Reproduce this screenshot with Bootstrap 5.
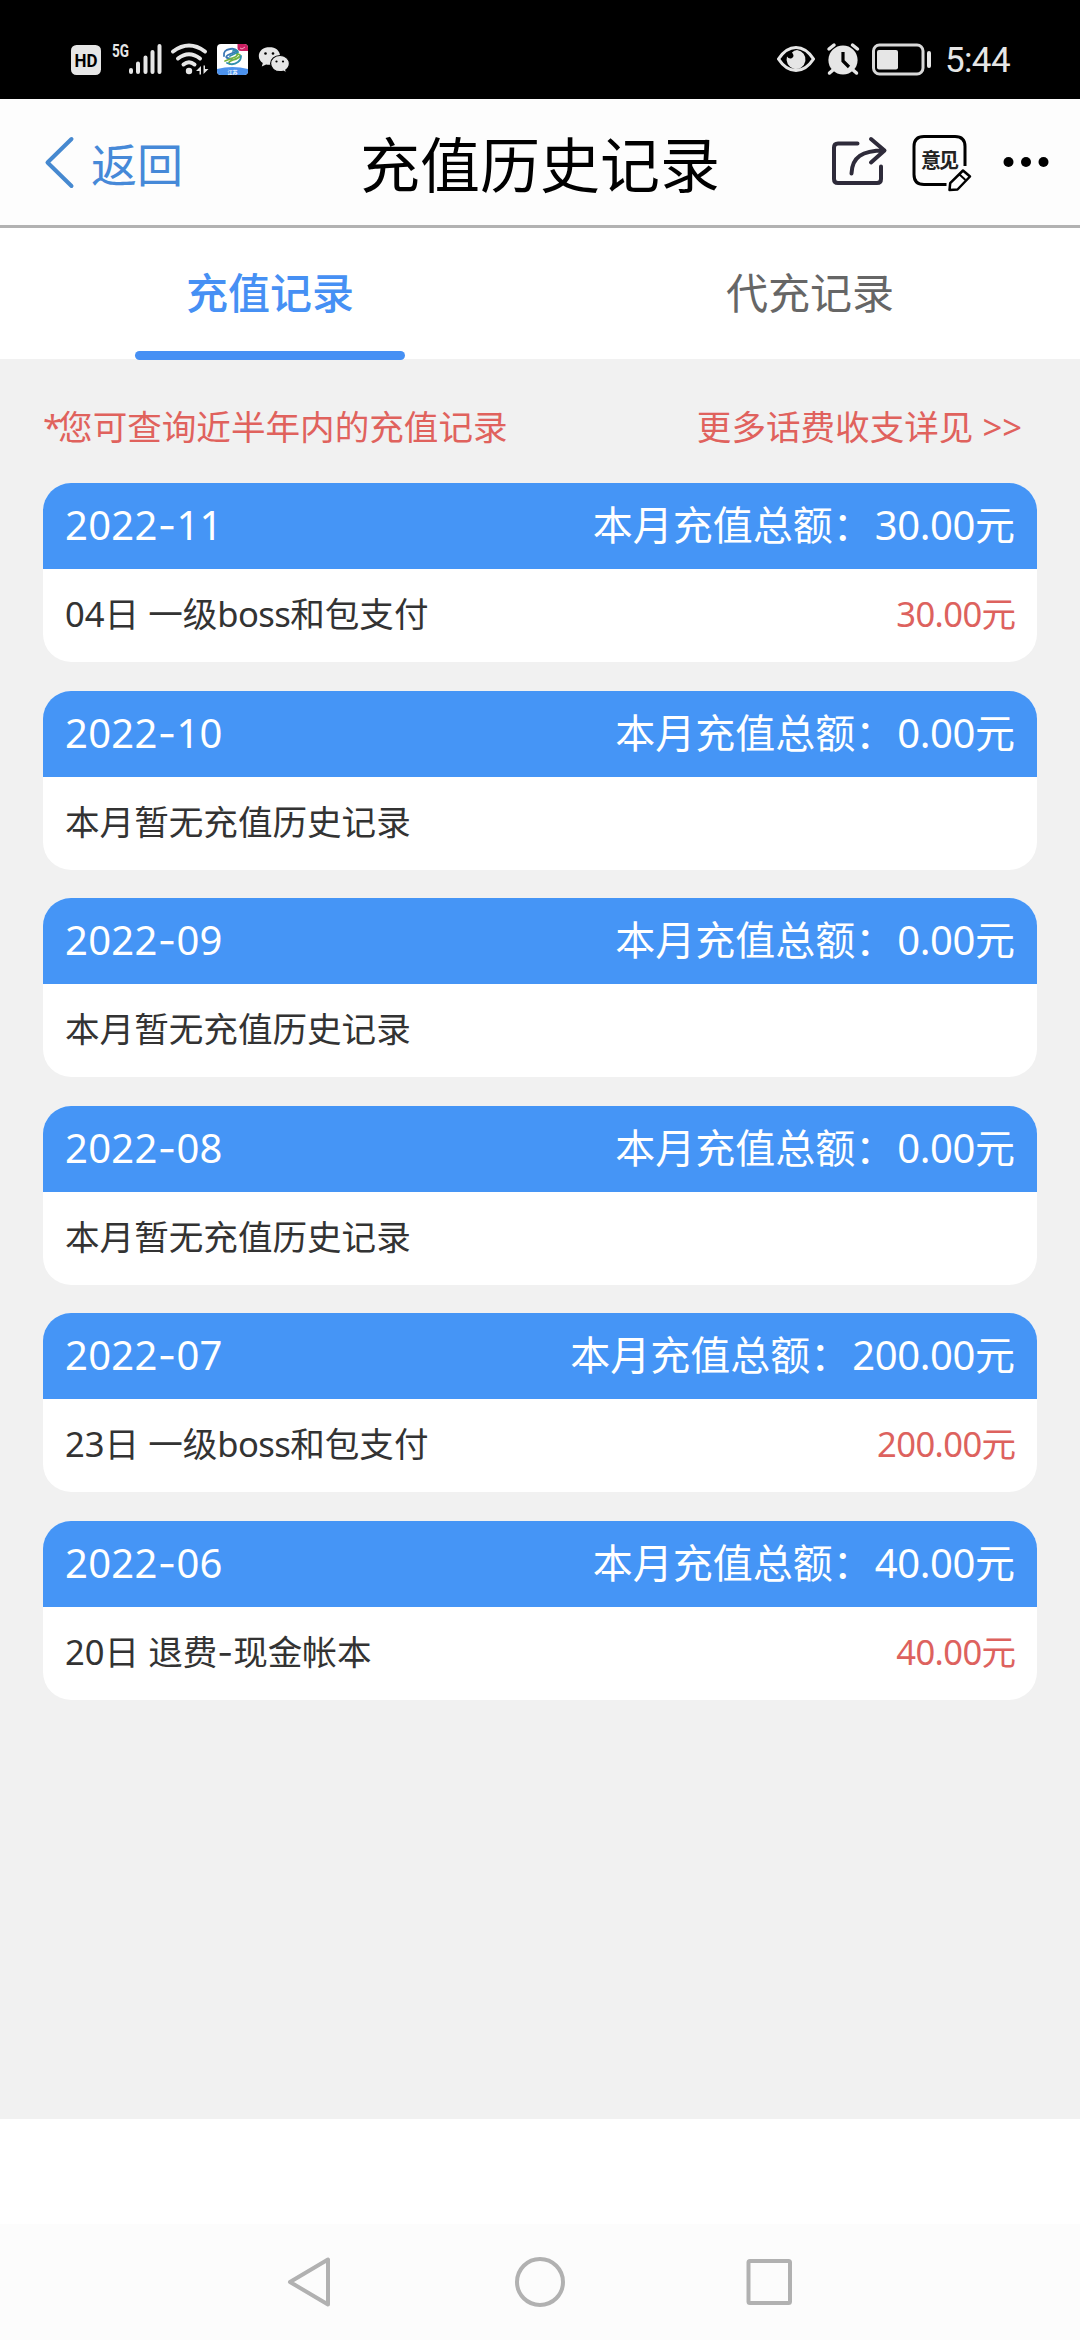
<!DOCTYPE html>
<html lang="zh-CN">
<head>
<meta charset="utf-8">
<meta name="viewport" content="width=device-width, initial-scale=1">
<title>充值历史记录</title>
<link href="https://cdn.jsdelivr.net/npm/bootstrap@5.3.0/dist/css/bootstrap.min.css" rel="stylesheet">
<style>
  body { width: 1080px; height: 2340px; overflow: hidden; background: #fff; color: #333; font-family: "Noto Sans", "Noto Sans CJK SC", sans-serif; }
  svg { display: block; flex: none; }
  .status-bar { height: 99px; padding: 0 70px 0 60px; background: #000; }
  .clock { font: 400 35px/42px Roboto, sans-serif; color: #e6e6e6; letter-spacing: -.6px; margin: 40px 0 0 11px; }
  .app-header { height: 129px; background: #fdfdfd; border-bottom: 3px solid #b2b2b2; }
  .app-header .side { flex: 1 1 0; }
  .back-link { color: #4689d8; font-size: 46px; line-height: 60px; padding-left: 43px; gap: 16px; }
  .back-link span { padding-top: 4px; }
  .page-title { font-size: 60px; line-height: 80px; color: #000; font-weight: 400; padding-top: 5px; }
  .tab-strip { height: 131px; background: #fff; }
  .tab-strip .nav-link { height: 131px; padding: 0; color: #666; font-size: 42px; line-height: 130px; position: relative; border-radius: 0; }
  .tab-strip .nav-link.active { color: #4690f4; font-weight: 500; }
  .tab-strip .nav-link.active::after { content: ""; position: absolute; left: 25%; width: 50%; bottom: -1px; height: 9px; border-radius: 5px; background: #4690f4; }
  .records { height: 1760px; background: #f1f1f1; padding: 46px 43px 0; }
  .notice { font-size: 34.6px; line-height: 44px; color: #e0625d; margin-bottom: 34px; }
  .notice .more { padding-right: 15px; }
  .star { letter-spacing: -4px; }
  .month { height: 179px; border: 0; border-radius: 28px; overflow: hidden; margin-bottom: 28.6px; }
  .month .card-header { height: 86px; padding: 0 22px; border: 0; background: #4595f6; color: #fff; font-size: 40px; line-height: 83px; }
  .month .card-body { padding: 0 22px; font-size: 34.6px; line-height: 90px; color: #333; flex: none; height: 93px; }
  .total { letter-spacing: -.4px; margin-left: 2px; }
  .date { letter-spacing: .3px; }
  .amount { color: #dd625e; }
  .amount, .latin { letter-spacing: -.6px; }
  .amount { margin-right: -.6px; }
  .dash { font-family: Inter, sans-serif; }
  .spacer { height: 105px; background: #fff; }
  .sys-nav { height: 116px; background: #fcfcfc; }
</style>
</head>
<body>
<div class="status-bar d-flex align-items-start justify-content-between">
  <svg width="240" height="99" viewBox="60 0 240 99">
    <rect x="71" y="45" width="30" height="30" rx="5.5" fill="#e6e6e6"/>
    <text x="86" y="67" font-family="Roboto" font-weight="700" font-size="19" text-anchor="middle" textLength="23" lengthAdjust="spacingAndGlyphs" fill="#000">HD</text>
    <text x="112" y="57" font-family="Roboto" font-weight="700" font-size="18" textLength="17" lengthAdjust="spacingAndGlyphs" fill="#e6e6e6">5G</text>
    <g stroke="#e6e6e6" stroke-width="4" stroke-linecap="round" fill="none">
      <path d="M131 70v2M138 63.5V72M145.5 57.5V72M152.5 52V72M159.5 46V72"/>
      <path d="M173 51.5Q189 39.500 205 51.500M178 58.500Q189 50 200 58.500M183.500 64.500Q189 60 194.500 64.500"/>
    </g>
    <circle cx="189" cy="71" r="3.2" fill="#e6e6e6"/>
    <path d="M196 71l5-5v8.500h-1.500V71zM208.500 69l-5 5V65.500h1.500V69z" fill="#e6e6e6"/>
    <rect x="217" y="44" width="31" height="31" rx="4" fill="#fff"/>
    <path d="M217 69q15.500-4 31 0v2q0 4-4 4h-23q-4 0-4-4z" fill="#4c92ee"/>
    <text x="232.500" y="74" font-family="Noto Sans CJK SC" font-weight="700" font-size="5" text-anchor="middle" fill="#fff">江苏</text>
    <path d="M237.500 44H244q4 0 4 4v3h-7q-3.500 0-3.500-3.500z" fill="#cb1e61"/>
    <path d="M240 48l2 1 3-2" stroke="#f4a5c3" fill="none"/>
    <g fill="none" stroke-width="1.800" stroke-linecap="round">
      <path d="M224 56q-1-6 6-7 5-1 7 2l-9 4q-3 2-1 3l5 1" stroke="#3976b5"/>
      <path d="M225 61l10-4q4-2 1-4l4 2M240 56q-1 2-7 4-6 2-3 4" stroke="#73b43f"/>
      <path d="M227 63q6 3 11-1 3-2 3-6M233 51q4-2 5 1l-8 4" stroke="#318fae"/>
    </g>
    <path d="M269.500 47c-6 0-10.700 3.900-10.700 9 0 3 1.600 5.400 4 7l-1 3.600 4.300-2.200c1 .3 2 .4 3.400.4 6 0 10.600-4 10.600-8.800 0-5.100-4.600-9-10.600-9z" fill="#e6e6e6"/>
    <path d="M280 55.500c-5.300 0-9.400 3.600-9.400 8.100s4.100 8.100 9.400 8.100c1.200 0 2.200-.2 3.200-.5l3.600 1.900-1-3.100c2.200-1.500 3.600-3.700 3.600-6.400 0-4.500-4.100-8.100-9.400-8.100z" fill="#e6e6e6" stroke="#000" stroke-width="1.200"/>
    <g><circle cx="265.500" cy="53.500" r="1.300"/><circle cx="273" cy="53.500" r="1.300"/><circle cx="276.500" cy="61.500" r="1.100"/><circle cx="283" cy="61.500" r="1.100"/></g>
  </svg>
  <div class="d-flex">
    <svg width="160" height="99" viewBox="774 0 160 99">
      <path d="M778.500 59Q786 47.500 796 47.500T813.500 59Q806 70.500 796 70.500T778.500 59z" fill="none" stroke="#e6e6e6" stroke-width="3.200" stroke-linejoin="round"/>
      <path d="M797 50a9.500 9.500 0 1 1-10 6.500q2 3 5 1.500 3-2 0-5.500 2-2.500 5-2.500z" fill="#e6e6e6"/>
      <circle cx="843" cy="60" r="14.600" fill="#e6e6e6"/>
      <path d="M829 49l5-4M857.500 49l-5-4M833 70l-3.500 3M853 70l3.500 3" stroke="#e6e6e6" stroke-width="3.500" stroke-linecap="round"/>
      <path d="M843 52v9l6 6" fill="none" stroke="#000" stroke-width="3.200"/>
      <rect x="873.500" y="45" width="49.500" height="29" rx="6" fill="none" stroke="#d8d8d8" stroke-width="3"/>
      <rect x="877" y="50" width="21" height="19.500" rx="2" fill="#e6e6e6"/>
      <rect x="927" y="51" width="4" height="17" rx="2" fill="#e6e6e6"/>
    </svg>
    <div class="clock">5:44</div>
  </div>
</div>

<header class="app-header d-flex align-items-center">
  <div class="side">
    <div class="back-link d-flex align-items-center">
      <svg width="32" height="56" viewBox="43 135 32 56"><path d="M71.500 140L47.500 163.500L71.500 187" fill="none" stroke="#4689d0" stroke-width="4" stroke-linecap="round" stroke-linejoin="round"/></svg>
      <span>返回</span>
    </div>
  </div>
  <h1 class="page-title mb-0">充值历史记录</h1>
  <div class="side d-flex justify-content-end">
    <svg width="260" height="126" viewBox="820 99 260 126">
      <g fill="none" stroke="#2e2b3a" stroke-width="4" stroke-linecap="round" stroke-linejoin="round">
        <path d="M857.500 143.500H838q-4 0-4 4V179q0 4 4 4h39q4 0 4-4V166.500"/>
        <path d="M851.500 173.500C852 157 862 150.500 884 150.500M871 139L884.500 150.500L871 162.500"/>
      </g>
      <g fill="none" stroke="#000" stroke-width="3" stroke-linejoin="round">
        <path d="M946.500 184.500H924q-10 0-10-10V146.500q0-10 10-10h31q10 0 10 10V166"/>
        <path d="M949.500 190l.700-6.800L963 170.500l7 6-12.500 13z" stroke-width="2.500"/>
        <path d="M959.500 174.500l6 5.500" stroke-width="2"/>
      </g>
      <text x="940" y="168" font-family="Noto Sans CJK SC" font-size="20" font-weight="700" text-anchor="middle" textLength="38" fill="#222">意见</text>
      <circle cx="1008.500" cy="162" r="5"/><circle cx="1026" cy="162" r="5"/><circle cx="1043.500" cy="162" r="5"/>
    </svg>
  </div>
</header>

<nav class="tab-strip nav nav-fill">
  <a class="nav-link nav-item active w-50" href="#">充值记录</a>
  <a class="nav-link nav-item w-50" href="#">代充记录</a>
</nav>

<main class="records">
  <div class="notice d-flex justify-content-between"><span><span class="star">*</span>您可查询近半年内的充值记录</span><span class="more">更多话费收支详见 &gt;&gt;</span></div>

  <section class="month card">
    <div class="card-header d-flex justify-content-between"><span class="date">2022<span class="dash">-</span>11</span><span>本月充值总额：<span class="total">30.00</span>元</span></div>
    <div class="card-body d-flex justify-content-between"><span>04日 一级<span class="latin">boss</span>和包支付</span><span class="amount">30.00元</span></div>
  </section>
  <section class="month card">
    <div class="card-header d-flex justify-content-between"><span class="date">2022<span class="dash">-</span>10</span><span>本月充值总额：<span class="total">0.00</span>元</span></div>
    <div class="card-body"><span>本月暂无充值历史记录</span></div>
  </section>
  <section class="month card">
    <div class="card-header d-flex justify-content-between"><span class="date">2022<span class="dash">-</span>09</span><span>本月充值总额：<span class="total">0.00</span>元</span></div>
    <div class="card-body"><span>本月暂无充值历史记录</span></div>
  </section>
  <section class="month card">
    <div class="card-header d-flex justify-content-between"><span class="date">2022<span class="dash">-</span>08</span><span>本月充值总额：<span class="total">0.00</span>元</span></div>
    <div class="card-body"><span>本月暂无充值历史记录</span></div>
  </section>
  <section class="month card">
    <div class="card-header d-flex justify-content-between"><span class="date">2022<span class="dash">-</span>07</span><span>本月充值总额：<span class="total">200.00</span>元</span></div>
    <div class="card-body d-flex justify-content-between"><span>23日 一级<span class="latin">boss</span>和包支付</span><span class="amount">200.00元</span></div>
  </section>
  <section class="month card">
    <div class="card-header d-flex justify-content-between"><span class="date">2022<span class="dash">-</span>06</span><span>本月充值总额：<span class="total">40.00</span>元</span></div>
    <div class="card-body d-flex justify-content-between"><span>20日 退费<span class="dash">-</span>现金帐本</span><span class="amount">40.00元</span></div>
  </section>
</main>

<div class="spacer"></div>
<footer class="sys-nav d-flex justify-content-center">
  <svg width="520" height="116" viewBox="280 2224 520 116" fill="none" stroke="#b1b1b1" stroke-width="4" stroke-linejoin="round">
    <path d="M328 2259.500V2304.500L290 2282z"/>
    <circle cx="540" cy="2282" r="23"/>
    <rect x="748.500" y="2261" width="41.500" height="42" rx="1.500"/>
  </svg>
</footer>
<script src="https://cdn.jsdelivr.net/npm/bootstrap@5.3.0/dist/js/bootstrap.bundle.min.js"></script>
</body>
</html>
